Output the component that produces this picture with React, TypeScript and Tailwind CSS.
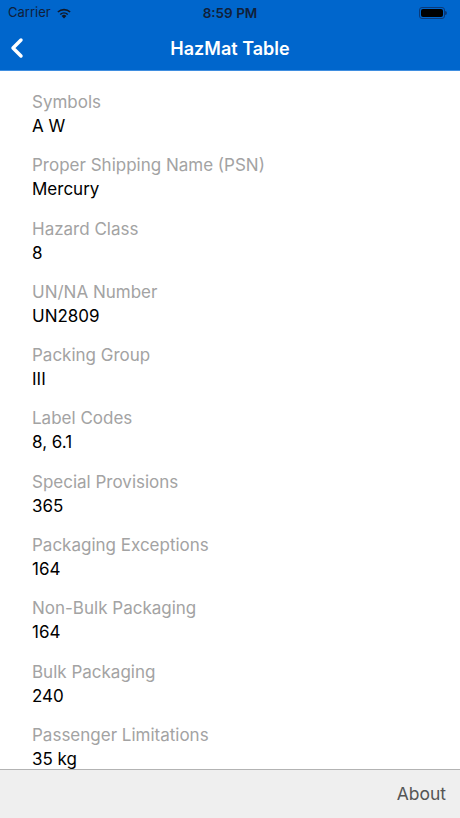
import { ChevronLeft } from "lucide-react";

const rows: [string, string][] = [
  ["Symbols", "A W"],
  ["Proper Shipping Name (PSN)", "Mercury"],
  ["Hazard Class", "8"],
  ["UN/NA Number", "UN2809"],
  ["Packing Group", "III"],
  ["Label Codes", "8, 6.1"],
  ["Special Provisions", "365"],
  ["Packaging Exceptions", "164"],
  ["Non-Bulk Packaging", "164"],
  ["Bulk Packaging", "240"],
  ["Passenger Limitations", "35 kg"],
];

const WifiIcon = () => (
  <svg width="16" height="12" viewBox="0 0 16 12" className="ml-[5px]">
    <path d="M8 11.5 L5.6 8.9 A3.6 3.6 0 0 1 10.4 8.9 Z" fill="#111827" />
    <path d="M3.7 6.9 A6.3 6.3 0 0 1 12.3 6.9 L11.2 8.1 A4.7 4.7 0 0 0 4.8 8.1 Z" fill="#111827" />
    <path d="M1.3 4.4 A9.8 9.8 0 0 1 14.7 4.4 L13.6 5.6 A8.2 8.2 0 0 0 2.4 5.6 Z" fill="#111827" />
  </svg>
);

export default function App() {
  return (
    <div className="w-[460px] h-[818px] flex flex-col bg-white overflow-hidden" style={{ fontFamily: "Inter, 'Liberation Sans', sans-serif" }}>
      <div className="bg-[#0066cc] border-b border-[#3f8ee0]">
        <div className="h-[26px] relative flex items-center px-2 text-[13px] text-[#10203a]">
          <span>Carrier</span>
          <WifiIcon />
          <span className="absolute left-0 right-0 text-center text-[13.5px] font-semibold pointer-events-none">8:59 PM</span>
          <div className="ml-auto mr-[5px] flex items-center">
            <div className="w-[26px] h-[12px] rounded-[3px] border border-[#0a3a7a] p-[1px]">
              <div className="w-full h-full rounded-[2px] bg-black" />
            </div>
            <div className="w-[2px] h-[4px] bg-[#0a3a7a] rounded-r-sm" />
          </div>
        </div>
        <div className="h-[44px] relative flex items-center">
          <ChevronLeft className="w-8 h-8 text-white ml-[1px]" strokeWidth={2.6} />
          <span className="absolute left-0 right-0 text-center text-white text-[18px] font-semibold">HazMat Table</span>
        </div>
      </div>
      <div className="flex-1 overflow-hidden pt-[19px] pl-8">
        {rows.map(([label, value]) => (
          <div key={label} className="pb-[15.3px] text-[17px] leading-6">
            <div className="text-[#a3a3a3]">{label}</div>
            <div className="text-black">{value}</div>
          </div>
        ))}
      </div>
      <div className="h-[49px] border-t border-[#b3b3b3] bg-[#efefef] flex items-center justify-end pr-[14px]">
        <span className="text-[17.5px] text-[#555555]">About</span>
      </div>
    </div>
  );
}
